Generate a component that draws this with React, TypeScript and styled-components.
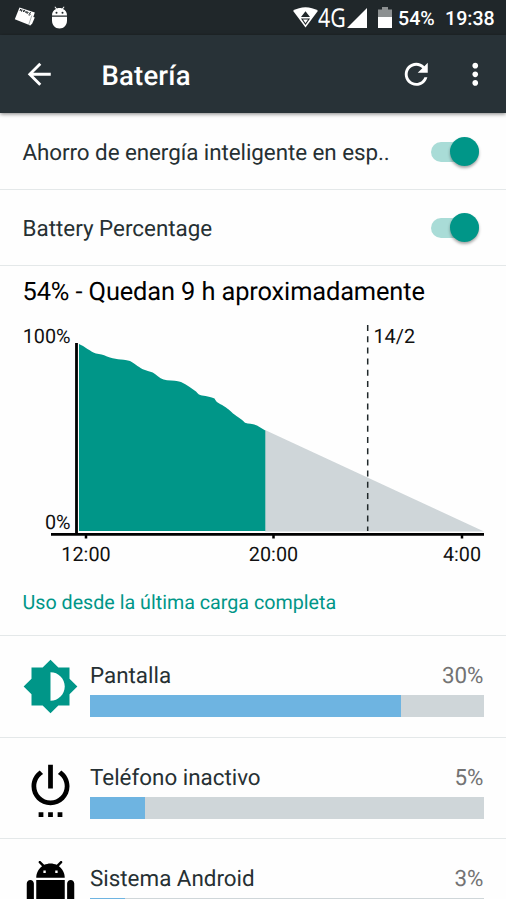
import React from "react";
import styled, { createGlobalStyle } from "styled-components";

const GlobalStyle = createGlobalStyle`
  * { box-sizing: border-box; }
  body { margin: 0; background: #fff; overflow: hidden; }
`;

const Screen = styled.div`
  width: 506px;
  height: 899px;
  overflow: hidden;
  background: #fefefe;
  font-family: Roboto, "Liberation Sans", sans-serif;
  color: #263033;
  white-space: nowrap;
  text-rendering: geometricPrecision;
`;

const StatusBar = styled.div`
  height: 35px;
  background: #20272a;
  color: #fff;
  display: flex;
  align-items: center;
  padding: 0 12px 0 14px;
`;

const Notifications = styled.div`
  display: flex;
  gap: 15px;
  flex: 1;
`;

const StatusIcon = styled.svg<{ $gap?: number }>`
  display: block;
  flex: none;
  margin-right: ${(p) => p.$gap ?? 0}px;
`;

const StatusText = styled.span<{ $width: number; $gap?: number }>`
  font-size: 19.6px;
  font-weight: 500;
  line-height: 35px;
  width: ${(p) => p.$width}px;
  margin-right: ${(p) => p.$gap ?? 0}px;
  padding-top: 2px;
`;

const Network = styled.span`
  font: 26px/35px "Noto Sans", sans-serif;
  width: 29px;
  transform: scaleX(0.82);
  transform-origin: left center;
`;

const AppBar = styled.header`
  height: 78px;
  background: #283237;
  color: #fff;
  display: flex;
  align-items: center;
  padding: 0 14px 0 22px;
  box-shadow: 0 1px 4px rgba(0, 0, 0, 0.5);
  position: relative;
`;

const BarIcon = styled.svg`
  width: 34.5px;
  height: 34.5px;
  fill: currentColor;
  flex: none;
`;

const Title = styled.h1`
  margin: 3px 0 0 45px;
  font-size: 27.5px;
  font-weight: 500;
  letter-spacing: 0.2px;
  flex: 1;
`;

const Actions = styled.div`
  display: flex;
  gap: 24.5px;
  margin-right: -0.5px;
`;

const SettingRow = styled.div<{ $first?: boolean }>`
  height: ${(p) => (p.$first ? 77 : 76)}px;
  border-bottom: 1px solid #e4e8e9;
  display: flex;
  align-items: center;
  justify-content: space-between;
  padding: ${(p) => (p.$first ? 1 : 0)}px 27px 0 22.5px;
  font-size: 22.4px;
`;

const Label = styled.span<{ $spacing?: number }>`
  letter-spacing: ${(p) => p.$spacing ?? 0}px;
  padding-top: 3px;
`;

const Track = styled.div`
  width: 48px;
  height: 20px;
  border-radius: 10px;
  background: #a9dcd7;
  display: flex;
  align-items: center;
  justify-content: flex-end;
`;

const Thumb = styled.div`
  width: 29px;
  height: 29px;
  border-radius: 50%;
  background: #009688;
  box-shadow: 0 2px 3px rgba(0, 0, 0, 0.35);
`;

const Summary = styled.div`
  height: 50px;
  padding: 0 22.5px;
  color: #000;
  font-size: 25.4px;
  letter-spacing: -0.12px;
  line-height: 52px;
`;

const Chart = styled.svg`
  display: block;
  font-family: Roboto, "Liberation Sans", sans-serif;
  font-size: 19.8px;
  fill: #111;
`;

const Section = styled.h2`
  margin: 0;
  height: 66px;
  padding: 0 22.5px;
  border-bottom: 1px solid #e4e8e9;
  color: #009688;
  font-size: 19.7px;
  font-weight: 400;
  line-height: 66px;
`;

const UsageRow = styled.div`
  height: 101.7px;
  border-bottom: 1px solid #e4e8e9;
  display: flex;
  padding: 22px 22.5px 0 22px;
`;

const UsageIcon = styled.svg<{ $color: string }>`
  width: 57px;
  height: 57px;
  flex: none;
  fill: ${(p) => p.$color};
`;

const UsageBody = styled.div`
  margin-left: 11px;
  flex: 1;
`;

const UsageHead = styled.div`
  display: flex;
  justify-content: space-between;
  font-size: 22.4px;
  line-height: 36.5px;
  height: 37px;
`;

const Percent = styled.span`
  color: #737373;
`;

const Bar = styled.div`
  height: 22px;
  background: #cfd6d9;
`;

const Fill = styled.div<{ $width: number }>`
  height: 100%;
  width: ${(p) => p.$width}px;
  background: #6eb4e1;
`;

const brightness =
  "M20 15.31L23.31 12 20 8.69V4h-4.69L12 .69 8.69 4H4v4.69L.69 12 4 15.31V20h4.69L12 23.31 15.31 20H20v-4.69zM12 18V6c3.31 0 6 2.69 6 6s-2.69 6-6 6z";
const power =
  "M7 24h2v-2H7v2zm4 0h2v-2h-2v2zm2-22h-2v10h2V2zm3.56 2.44l-1.45 1.45C16.84 6.94 18 8.83 18 11c0 3.31-2.69 6-6 6s-6-2.69-6-6c0-2.17 1.16-4.06 2.88-5.12L7.44 4.44C5.36 5.88 4 8.28 4 11c0 4.42 3.58 8 8 8s8-3.58 8-8c0-2.72-1.36-5.12-3.44-6.56zM15 24h2v-2h-2v2z";
const android =
  "M6 18c0 .55.45 1 1 1h1v3.5c0 .83.67 1.5 1.5 1.5s1.5-.67 1.5-1.5V19h2v3.5c0 .83.67 1.5 1.5 1.5s1.5-.67 1.5-1.5V19h1c.55 0 1-.45 1-1V8H6v10zM3.5 8C2.67 8 2 8.67 2 9.5v7c0 .83.67 1.5 1.5 1.5S5 17.33 5 16.5v-7C5 8.67 4.33 8 3.5 8zm17 0c-.83 0-1.5.67-1.5 1.5v7c0 .83.67 1.5 1.5 1.5s1.5-.67 1.5-1.5v-7c0-.83-.67-1.5-1.5-1.5zm-4.97-5.84l1.3-1.3c.2-.2.2-.51 0-.71-.2-.2-.51-.2-.71 0l-1.48 1.48C13.85 1.23 12.95 1 12 1c-.96 0-1.86.23-2.66.63L7.85.15c-.2-.2-.51-.2-.71 0-.2.2-.2.51 0 .71l1.31 1.31C6.97 3.26 6 5.01 6 7h12c0-1.99-.97-3.75-2.47-4.84zM10 5H9V4h1v1zm5 0h-1V4h1v1z";

const usage = [
  { name: "Pantalla", percent: "30%", fill: 311, icon: brightness, color: "#009688" },
  { name: "Teléfono inactivo", percent: "5%", fill: 55, icon: power, color: "#000" },
  { name: "Sistema Android", percent: "3%", fill: 35, icon: android, color: "#000" },
];

const Switch = () => (
  <Track>
    <Thumb />
  </Track>
);

export default function App() {
  return (
    <Screen>
      <GlobalStyle />
      <StatusBar>
        <Notifications>
          <StatusIcon width="22" height="22" viewBox="0 0 22 22">
            <path d="M5.5 1.5L20.8 6.5L16.5 19.5L0.8 13.3Z" fill="#fff" />
            <path d="M18 10.5L20.8 11.5L18 18L15.5 19.5Z" fill="#fff" />
            <path d="M17.8 9.5L14.6 19" stroke="#879092" strokeWidth=".7" />
            <path d="M6 4.8l.7-1.8.8 2.4.7-1.8M9.3 6l.6-1.8 1.2.4M9.6 5l1 .4M12 5l-.1 1.8 1.1-1.2.2 1.9 1.2-1.5M17 7l-1-.4-.6 1 .8.6-.7 1-1-.4" stroke="#20272a" strokeWidth="1" fill="none" />
          </StatusIcon>
          <StatusIcon width="17" height="23" viewBox="0 0 17 23">
            <path d="M1 9.5C1 6 2.5 4 5 2.9L3.5 1l.7-.5 1.7 2c1.7-.6 3.5-.6 5.2 0l1.7-2 .7.5L12 2.9c2.5 1.1 4 3.1 4 6.6Z" fill="#fff" />
            <path d="M1 10.7h15v3.8c0 4.6-3.1 8-7.5 8S1 19.1 1 14.5Z" fill="#fff" />
            <circle cx="5.5" cy="6.7" r="1" fill="#20272a" />
            <circle cx="11.5" cy="6.7" r="1" fill="#20272a" />
          </StatusIcon>
        </Notifications>
        <StatusIcon width="25" height="21" viewBox="0 0 25 21" $gap={0}>
          <path d="M0 3.8C7.5-.9 17.5-.9 25 3.8L12.5 20.5Z" fill="#fff" />
          <path d="M12.5 4.2L17 10H8Z" fill="#20272a" />
          <path d="M9 12h7l-3.5 5Z" fill="#fff" stroke="#20272a" strokeWidth="1.1" />
        </StatusIcon>
        <Network>4G</Network>
        <StatusIcon width="20" height="20" viewBox="0 0 20 20" $gap={11}>
          <path d="M20 0V20H0Z" fill="#fff" />
        </StatusIcon>
        <StatusIcon width="14" height="21" viewBox="0 0 14 21" $gap={6}>
          <path d="M0 2.5h4V0h6v2.5h4V10H0Z" fill="#8c9091" />
          <path d="M0 10h14v11H0Z" fill="#fff" />
        </StatusIcon>
        <StatusText $width={37} $gap={10}>54%</StatusText>
        <StatusText $width={49}>19:38</StatusText>
      </StatusBar>
      <AppBar>
        <BarIcon viewBox="0 0 24 24">
          <path d="M20 11H7.83l5.59-5.59L12 4l-8 8 8 8 1.41-1.41L7.83 13H20v-2z" />
        </BarIcon>
        <Title>Batería</Title>
        <Actions>
          <BarIcon viewBox="0 0 24 24">
            <path d="M17.65 6.35C16.2 4.9 14.21 4 12 4c-4.42 0-7.99 3.58-7.99 8s3.57 8 7.99 8c3.73 0 6.84-2.55 7.73-6h-2.08c-.82 2.33-3.04 4-5.65 4-3.31 0-6-2.69-6-6s2.69-6 6-6c1.66 0 3.14.69 4.22 1.78L13 11h7V4l-2.35 2.35z" />
          </BarIcon>
          <BarIcon viewBox="0 0 24 24">
            <path d="M12 8c1.1 0 2-.9 2-2s-.9-2-2-2-2 .9-2 2 .9 2 2 2zm0 2c-1.1 0-2 .9-2 2s.9 2 2 2 2-.9 2-2-.9-2-2-2zm0 6c-1.1 0-2 .9-2 2s.9 2 2 2 2-.9 2-2-.9-2-2-2z" />
          </BarIcon>
        </Actions>
      </AppBar>
      <SettingRow $first>
        <Label $spacing={-0.06}>Ahorro de energía inteligente en esp..</Label>
        <Switch />
      </SettingRow>
      <SettingRow>
        <Label>Battery Percentage</Label>
        <Switch />
      </SettingRow>
      <Summary>54% - Quedan 9 h aproximadamente</Summary>
      <Chart width="506" height="254" viewBox="0 316 506 254">
        <path d="M265 430L484 531.5H265Z" fill="#cfd6d9" />
        <path
          d="M79 344C84 346 91 352 96 353.5C100 354 103 354.5 107 356.5C115 360 121 358.5 130 361C136 364 139 368 145 370C149 371.5 152 371.5 155 374C159 377.5 162 379.5 167 380.2C173 380.7 177 380.5 181 382C187 385 192 388.5 196 391.5C198 394 199 395 202 395.5C207 396.3 211 397 214.5 398.5C216 401.5 217 402 220 404C226 407 229 409.5 233 413.5C238 417.5 241 418.5 245 422.7C249 424 253 423.6 257 425.5L265.3 430.5V531H79Z"
          fill="#009688"
        />
        <path d="M76.5 343V535M51 534.3H484" stroke="#000" strokeWidth="2.8" fill="none" />
        <path d="M86 534V538.5M273.5 534V538.5M462 534V538.5" stroke="#000" strokeWidth="2.5" />
        <path d="M367.7 325V531" stroke="#20282a" strokeWidth="1.5" strokeDasharray="6 5.2" />
        <text x="70.5" y="343.3" textAnchor="end">100%</text>
        <text x="70.5" y="528.5" textAnchor="end">0%</text>
        <text x="373.5" y="343.3">14/2</text>
        <text x="86" y="560.5" textAnchor="middle">12:00</text>
        <text x="273.5" y="560.5" textAnchor="middle">20:00</text>
        <text x="462" y="560.5" textAnchor="middle">4:00</text>
      </Chart>
      <Section>Uso desde la última carga completa</Section>
      {usage.map((item) => (
        <UsageRow key={item.name}>
          <UsageIcon viewBox="0 0 24 24" $color={item.color}>
            <path d={item.icon} />
          </UsageIcon>
          <UsageBody>
            <UsageHead>
              <span>{item.name}</span>
              <Percent>{item.percent}</Percent>
            </UsageHead>
            <Bar>
              <Fill $width={item.fill} />
            </Bar>
          </UsageBody>
        </UsageRow>
      ))}
    </Screen>
  );
}
